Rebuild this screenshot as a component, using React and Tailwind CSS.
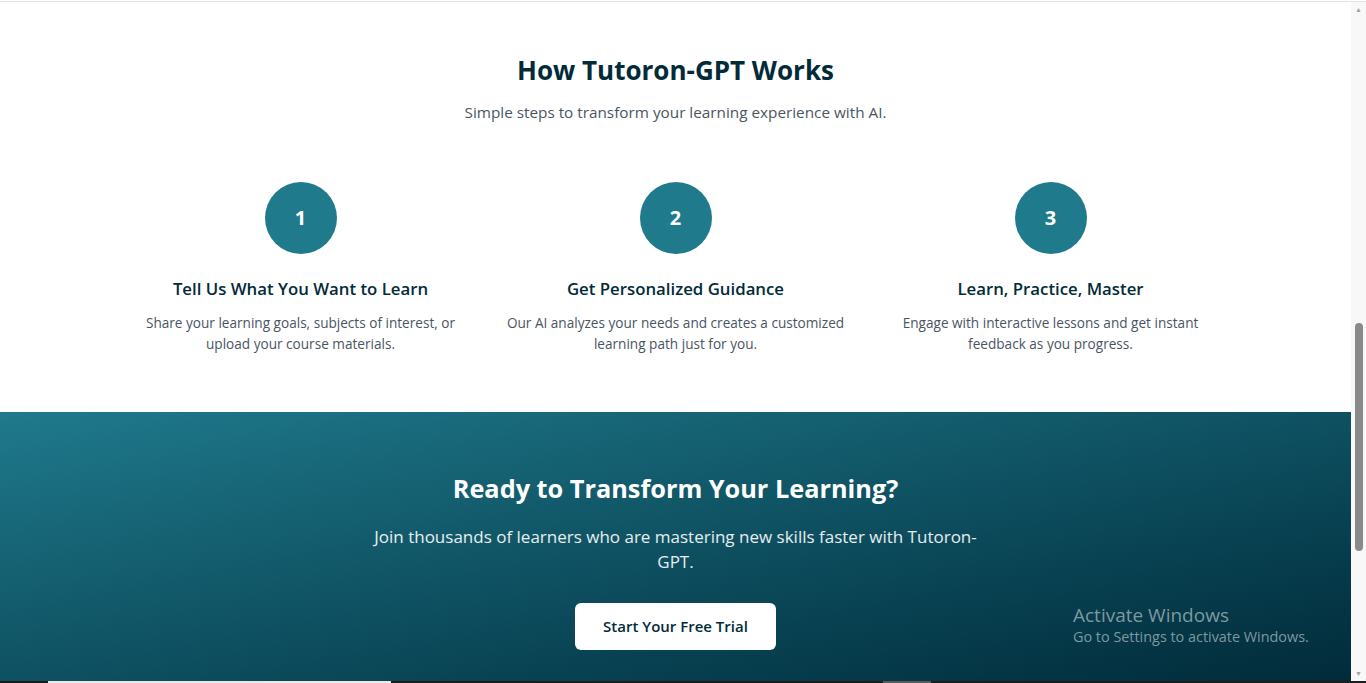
const steps = [
  {
    n: '1',
    title: 'Tell Us What You Want to Learn',
    text: 'Share your learning goals, subjects of interest, or upload your course materials.',
  },
  {
    n: '2',
    title: 'Get Personalized Guidance',
    text: 'Our AI analyzes your needs and creates a customized learning path just for you.',
  },
  {
    n: '3',
    title: 'Learn, Practice, Master',
    text: 'Engage with interactive lessons and get instant feedback as you progress.',
  },
];

const Scrollbar = () => (
  <div className="w-[15px] shrink-0 bg-[#f8f8f8] flex flex-col items-center">
    <div className="h-[15px] flex items-center justify-center text-[#a3a3a3] text-[7px] leading-none">▲</div>
    <div className="h-[306px]" />
    <div className="w-[8px] h-[228px] rounded-full bg-[#8a8a8a]" />
    <div className="flex-1" />
    <div className="h-[15px] flex items-center justify-center text-[#a3a3a3] text-[7px] leading-none">▼</div>
  </div>
);

export default function App() {
  return (
    <div className="relative h-[683px] overflow-hidden bg-white flex flex-col font-['Open_Sans',sans-serif]">
      <div className="h-px bg-white" />
      <div className="h-px bg-[#e3e4dc]" />

      <div className="flex flex-1 min-h-0">
        <main className="flex-1 flex flex-col overflow-hidden">
          {/* How it works */}
          <section className="h-[410px] shrink-0 flex flex-col items-center pt-[50px]">
            <h2 className="text-[26px] leading-[36px] font-bold text-[#022b3a]">How Tutoron-GPT Works</h2>
            <p className="mt-[10px] text-[15.3px] leading-[28px] text-[#4a5563]">
              Simple steps to transform your learning experience with AI.
            </p>

            <div className="mt-14 grid grid-cols-3 gap-8 w-[1093px]">
              {steps.map(s => (
                <div key={s.n} className="flex flex-col items-center text-center">
                  <div className="w-[72px] h-[72px] rounded-full bg-[#1f7a8c] flex items-center justify-center text-white text-[20px] font-bold">
                    {s.n}
                  </div>
                  <h3 className="mt-[21px] text-[16.8px] leading-[28px] font-semibold text-[#022b3a]">{s.title}</h3>
                  <p className="mt-[9px] text-[13.6px] leading-[21px] text-[#4a5563] max-w-[343px]">{s.text}</p>
                </div>
              ))}
            </div>
          </section>

          {/* CTA */}
          <section className="flex-1 bg-linear-to-br from-[#1f7a8c] to-[#022b3a] flex flex-col items-center pt-[58px] text-center">
            <h2 className="text-[25.3px] leading-[36px] font-bold text-white">Ready to Transform Your Learning?</h2>
            <p className="mt-[18px] max-w-[620px] text-[17px] leading-[25px] text-white/90">
              Join thousands of learners who are mastering new skills faster with Tutoron-GPT.
            </p>
            <button className="mt-[29px] w-[201px] h-[47px] rounded-md bg-white text-[#022b3a] text-[15px] font-semibold">
              Start Your Free Trial
            </button>
          </section>
        </main>
        <Scrollbar />
      </div>

      <div className="h-[2px] bg-[#1c1c1c] flex">
        <div className="ml-[48px] w-[343px] bg-[#e8e8e8]" />
        <div className="ml-[492px] w-[48px] bg-[#5a5a5a]" />
      </div>

      {/* Windows watermark */}
      <div className="absolute left-[1073px] top-[603px] text-[#9fb3ba]/80 pointer-events-none">
        <div className="text-[19px] leading-[24px]">Activate Windows</div>
        <div className="text-[14.4px] leading-[20px]">Go to Settings to activate Windows.</div>
      </div>
    </div>
  );
}
